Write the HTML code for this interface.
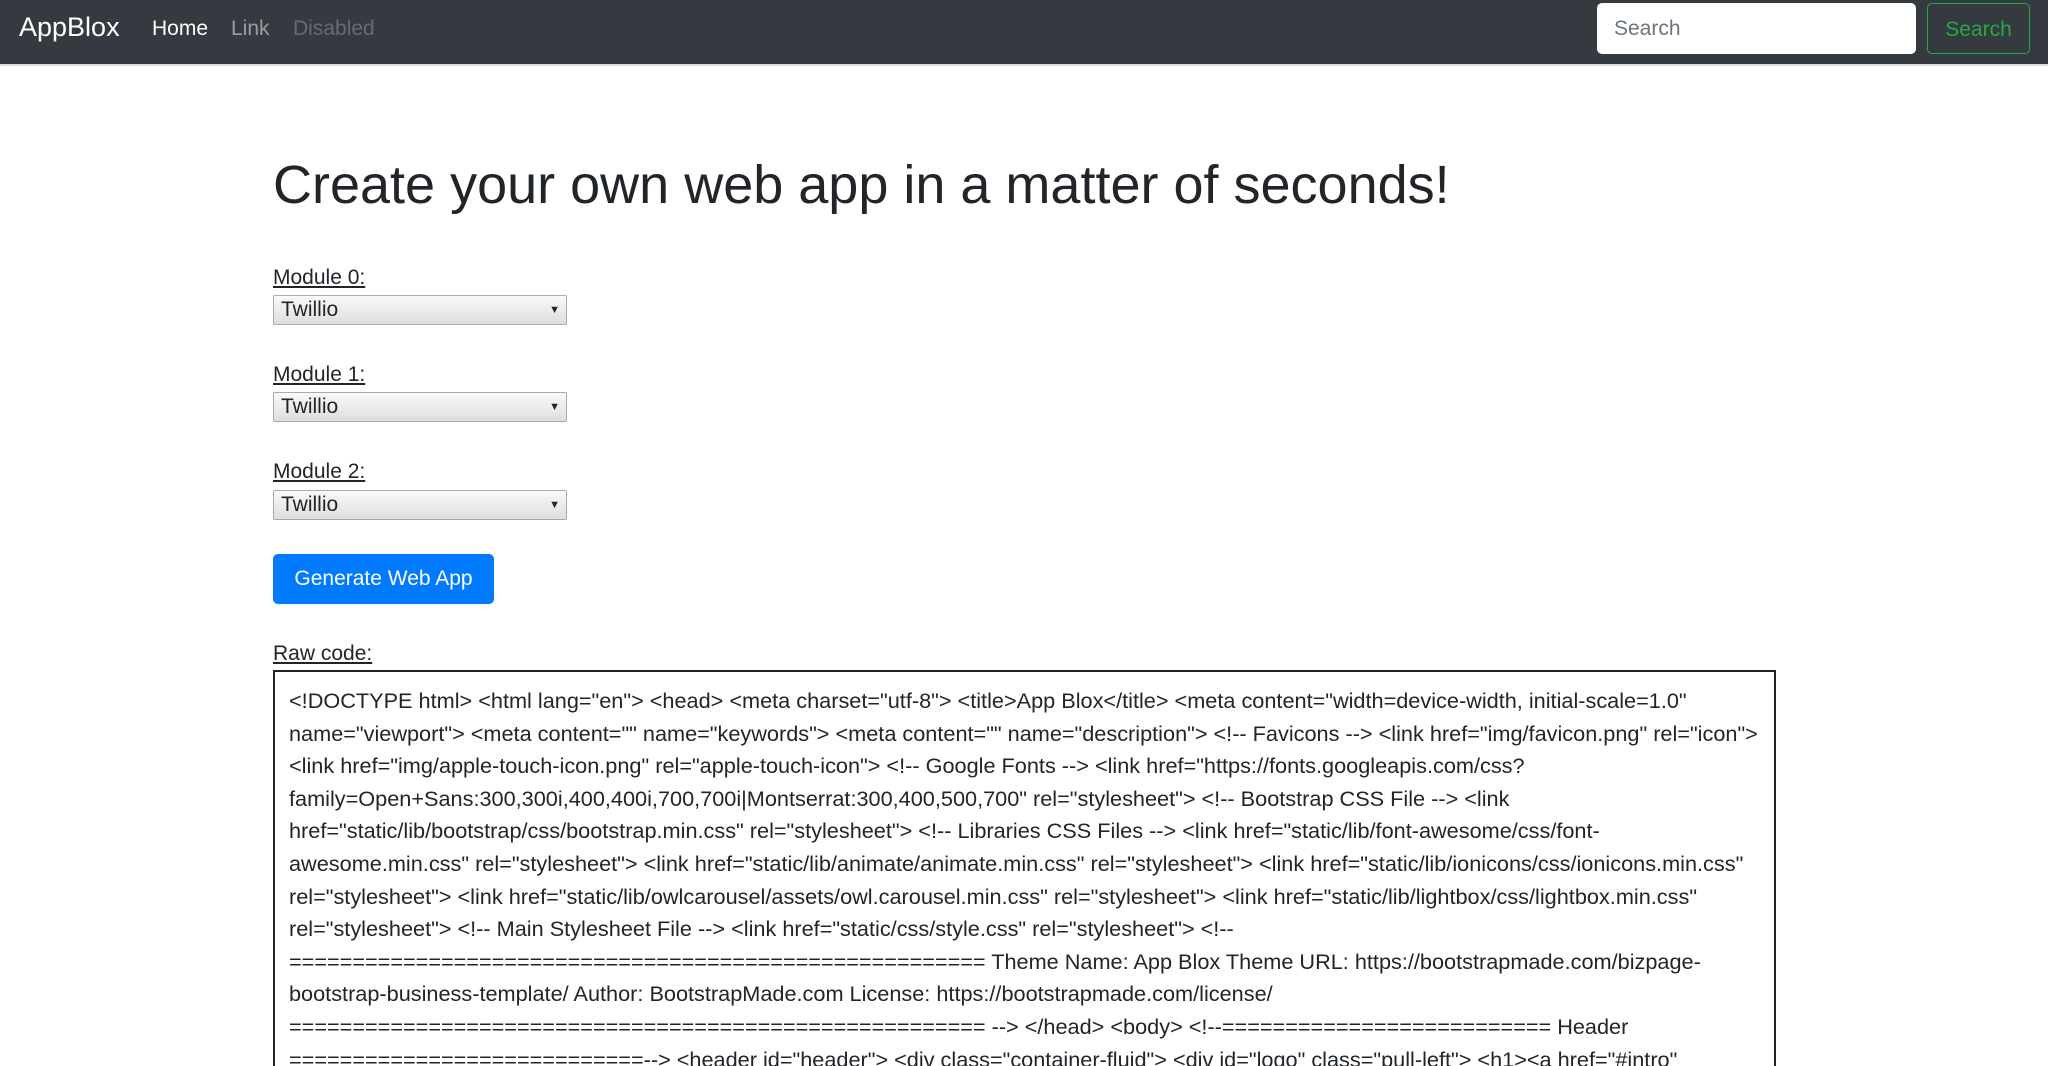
<!DOCTYPE html>
<html style="width:2048px;height:1066px;overflow:hidden"><head><meta charset="utf-8"><style>
*{box-sizing:border-box;margin:0;padding:0}
body{width:2048px;height:1066px;overflow:hidden;background:#fff;font-family:"Liberation Sans",Arial,sans-serif;color:#212529;position:relative}
.nav{position:absolute;left:0;top:0;width:2048px;height:66px;background:#343a40;border-bottom:2px solid #dcdcdc}
.brand{position:absolute;left:19px;top:12px;font-size:27px;color:#fff}
.nl{position:absolute;top:17px;font-size:21px}
.inp{position:absolute;left:1597px;top:3px;width:319px;height:51px;background:#fff;border-radius:5px;font-size:21px;color:#6c757d;padding:14px 0 0 17px}
.btn{position:absolute;left:1927px;top:3px;width:103px;height:51px;border:1.5px solid #28a745;border-radius:5px;color:#28a745;font-size:21px;text-align:center;padding-top:14px}
h1{position:absolute;left:273px;top:158px;font-size:54px;font-weight:400;line-height:1}
.lab{position:absolute;left:273px;font-size:21px;text-decoration:underline}
.sel{position:absolute;left:273px;width:294px;height:30px;border:1px solid #aaa;border-radius:2px;background:linear-gradient(#fafafa,#dedede);font-size:21px;padding:2px 0 0 7px}
.sel:after{content:"▼";position:absolute;right:6px;top:8px;font-size:11px}
.gen{position:absolute;left:273px;top:554px;width:221px;height:50px;background:#007bff;border-radius:5px;color:#fff;font-size:21px;text-align:center;padding-top:13px}
.box{position:absolute;left:273px;top:670px;width:1503px;height:396px;border:2px solid #222;border-bottom:none;padding:13px 0 0 14px;font-size:21.7px;line-height:32.6px;white-space:nowrap;overflow:hidden}
</style></head><body>
<div class="nav">
<div class="brand">AppBlox</div>
<div class="nl" style="left:152px;color:#fff">Home</div>
<div class="nl" style="left:231px;color:rgba(255,255,255,.5)">Link</div>
<div class="nl" style="left:293px;color:rgba(255,255,255,.25)">Disabled</div>
<div class="inp">Search</div>
<div class="btn">Search</div>
</div>
<h1>Create your own web app in a matter of seconds!</h1>
<div class="lab" style="top:266px">Module 0:</div>
<div class="sel" style="top:295px">Twillio</div>
<div class="lab" style="top:363px">Module 1:</div>
<div class="sel" style="top:392px">Twillio</div>
<div class="lab" style="top:460px">Module 2:</div>
<div class="sel" style="top:490px">Twillio</div>
<div class="gen">Generate Web App</div>
<div class="lab" style="top:642px">Raw code:</div>
<div class="box">
&lt;!DOCTYPE html&gt; &lt;html lang="en"&gt; &lt;head&gt; &lt;meta charset="utf-8"&gt; &lt;title&gt;App Blox&lt;/title&gt; &lt;meta content="width=device-width, initial-scale=1.0"<br>
name="viewport"&gt; &lt;meta content="" name="keywords"&gt; &lt;meta content="" name="description"&gt; &lt;!-- Favicons --&gt; &lt;link href="img/favicon.png" rel="icon"&gt;<br>
&lt;link href="img/apple-touch-icon.png" rel="apple-touch-icon"&gt; &lt;!-- Google Fonts --&gt; &lt;link href="https://fonts.googleapis.com/css?<br>
family=Open+Sans:300,300i,400,400i,700,700i|Montserrat:300,400,500,700" rel="stylesheet"&gt; &lt;!-- Bootstrap CSS File --&gt; &lt;link<br>
href="static/lib/bootstrap/css/bootstrap.min.css" rel="stylesheet"&gt; &lt;!-- Libraries CSS Files --&gt; &lt;link href="static/lib/font-awesome/css/font-<br>
awesome.min.css" rel="stylesheet"&gt; &lt;link href="static/lib/animate/animate.min.css" rel="stylesheet"&gt; &lt;link href="static/lib/ionicons/css/ionicons.min.css"<br>
rel="stylesheet"&gt; &lt;link href="static/lib/owlcarousel/assets/owl.carousel.min.css" rel="stylesheet"&gt; &lt;link href="static/lib/lightbox/css/lightbox.min.css"<br>
rel="stylesheet"&gt; &lt;!-- Main Stylesheet File --&gt; &lt;link href="static/css/style.css" rel="stylesheet"&gt; &lt;!--<br>
======================================================= Theme Name: App Blox Theme URL: https://bootstrapmade.com/bizpage-<br>
bootstrap-business-template/ Author: BootstrapMade.com License: https://bootstrapmade.com/license/<br>
======================================================= --&gt; &lt;/head&gt; &lt;body&gt; &lt;!--========================== Header<br>
============================--&gt; &lt;header id="header"&gt; &lt;div class="container-fluid"&gt; &lt;div id="logo" class="pull-left"&gt; &lt;h1&gt;&lt;a href="#intro"<br>
class="scrollto"&gt;App Blox&lt;/a&gt;&lt;/h1&gt;
</div>
</body></html>
